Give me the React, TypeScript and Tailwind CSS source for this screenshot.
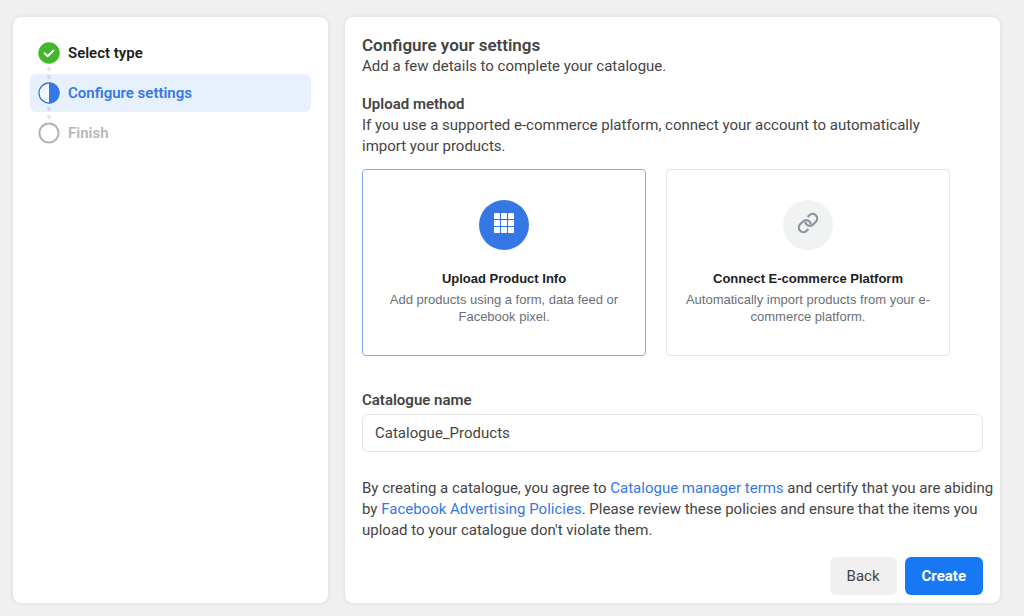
import React, { useState } from "react";
import clsx from "clsx";

type StepStatus = "done" | "current" | "upcoming";

interface Step {
  label: string;
  status: StepStatus;
}

const STEPS: Step[] = [
  { label: "Select type", status: "done" },
  { label: "Configure settings", status: "current" },
  { label: "Finish", status: "upcoming" },
];

function StepIcon({ status }: { status: StepStatus }) {
  if (status === "done") {
    return (
      <svg width="22" height="22" viewBox="0 0 22 22" aria-hidden="true">
        <circle cx="11" cy="11" r="10.7" fill="#42b72a" />
        <path
          d="M6.6 11.4l3 2.9 5.8-5.7"
          fill="none"
          stroke="#fff"
          strokeWidth="2"
          strokeLinecap="round"
          strokeLinejoin="round"
        />
      </svg>
    );
  }
  if (status === "current") {
    return (
      <svg width="22" height="22" viewBox="0 0 22 22" aria-hidden="true">
        <circle cx="11" cy="11" r="10" fill="#f3f8ff" stroke="#3578e5" strokeWidth="1.3" />
        <path d="M11 .5a10.5 10.5 0 0 1 0 21z" fill="#3578e5" />
      </svg>
    );
  }
  return (
    <svg width="22" height="22" viewBox="0 0 22 22" aria-hidden="true">
      <circle cx="11" cy="11" r="9.6" fill="#fff" stroke="#b0b3b8" strokeWidth="2" />
    </svg>
  );
}

function StepItem({ step, first, last }: { step: Step; first: boolean; last: boolean }) {
  const current = step.status === "current";
  const dot = current ? "bg-[#ccd9e9]" : "bg-[#e4e6e8]";

  return (
    <li
      aria-current={current ? "step" : undefined}
      className={clsx(
        "flex items-center gap-2 rounded-md px-2 py-px",
        current && "bg-[#e7f0fd]"
      )}
    >
      <div className="flex flex-col items-center gap-[3px]">
        <span className={clsx("size-1 rounded-full", first ? "bg-transparent" : dot)} />
        <StepIcon status={step.status} />
        <span className={clsx("size-1 rounded-full", last ? "bg-transparent" : dot)} />
      </div>
      <span
        className={clsx(
          "text-[15px] leading-[21px] font-semibold",
          step.status === "done" && "text-[#1c1e21]",
          current && "text-[#3578e5]",
          step.status === "upcoming" && "text-[#b4b7bb]"
        )}
      >
        {step.label}
      </span>
    </li>
  );
}

function GridIcon() {
  const cells = [0, 7, 14];
  return (
    <svg width="20" height="20" viewBox="0 0 20 20" fill="#fff" aria-hidden="true">
      {cells.map((y) =>
        cells.map((x) => <rect key={`${x}-${y}`} x={x} y={y} width="6" height="6" rx="0.8" />)
      )}
    </svg>
  );
}

function LinkIcon() {
  return (
    <svg
      width="22"
      height="22"
      viewBox="0 0 24 24"
      fill="none"
      stroke="#8d949e"
      strokeWidth="2.4"
      aria-hidden="true"
    >
      <path d="M9 10.5a5 5 0 0 0 8.54 3.04l3-3a5 5 0 0 0-7.07-7.07l-1.9 1.9" />
      <path d="M15 13.5a5 5 0 0 0-8.54-3.04l-3 3a5 5 0 0 0 7.07 7.07l1.9-1.9" />
    </svg>
  );
}

interface MethodCardProps {
  value: string;
  title: string;
  description: React.ReactNode;
  icon: React.ReactNode;
  selected: boolean;
  onSelect: (value: string) => void;
}

function MethodCard({ value, title, description, icon, selected, onSelect }: MethodCardProps) {
  return (
    <label
      className={clsx(
        "relative flex cursor-pointer flex-col items-center rounded border px-4 py-[30px] text-center font-['Liberation_Sans',Arial,sans-serif] text-[13px] leading-[17px]",
        selected ? "border-[#84abee]" : "border-[#e4e6e8]"
      )}
    >
      <input
        type="radio"
        name="upload-method"
        value={value}
        checked={selected}
        onChange={() => onSelect(value)}
        className="sr-only"
      />
      <span
        className={clsx(
          "flex size-[50px] items-center justify-center rounded-full pb-1",
          selected ? "bg-[#3578e5]" : "bg-[#f1f3f3]"
        )}
      >
        {icon}
      </span>
      <span className="mt-5 font-bold text-[#1c1e21]">{title}</span>
      <span className="mt-1 text-[#6a7078]">{description}</span>
    </label>
  );
}

export default function App() {
  const [method, setMethod] = useState("upload");
  const [name, setName] = useState("Catalogue_Products");

  return (
    <div className="flex min-h-screen items-stretch gap-[17px] bg-[#f0f0f0] pt-[17px] pr-6 pb-[13px] pl-[13px] font-[Roboto,sans-serif] text-[15px] leading-[21px] text-[#444]">
      <aside className="w-[315px] shrink-0 rounded-lg bg-white p-[17px] shadow-[0_0_4px_rgba(0,0,0,0.1)]">
        <ol className="flex flex-col gap-0.5">
          {STEPS.map((step, i) => (
            <StepItem
              key={step.label}
              step={step}
              first={i === 0}
              last={i === STEPS.length - 1}
            />
          ))}
        </ol>
      </aside>

      <main className="min-w-0 flex-1 rounded-lg bg-white px-[17px] pt-[18px] pb-2 shadow-[0_0_4px_rgba(0,0,0,0.1)]">
        <form onSubmit={(e) => e.preventDefault()}>
          <h1 className="text-[17px] font-semibold">Configure your settings</h1>
          <p>Add a few details to complete your catalogue.</p>

          <section className="mt-[17px] mr-[33px]">
            <h2 className="font-semibold">Upload method</h2>
            <p>
              If you use a supported e-commerce platform, connect your account to
              automatically import your products.
            </p>
            <div className="mt-3 grid grid-cols-2 gap-5">
              <MethodCard
                value="upload"
                title="Upload Product Info"
                description="Add products using a form, data feed or Facebook pixel."
                icon={<GridIcon />}
                selected={method === "upload"}
                onSelect={setMethod}
              />
              <MethodCard
                value="connect"
                title="Connect E-commerce Platform"
                description={
                  <>
                    Automatically import products from your e-
                    <br />
                    commerce platform.
                  </>
                }
                icon={<LinkIcon />}
                selected={method === "connect"}
                onSelect={setMethod}
              />
            </div>
          </section>

          <div className="mt-[34px]">
            <label htmlFor="catalogue-name" className="block font-semibold">
              Catalogue name
            </label>
            <input
              id="catalogue-name"
              type="text"
              value={name}
              onChange={(e) => setName(e.target.value)}
              className="mt-[3px] block h-[38px] w-full rounded-md border border-[#e4e4e4] px-3"
            />
          </div>

          <p className="mt-[26px] -mr-3">
            By creating a catalogue, you agree to{" "}
            <a href="#terms" className="text-[#3578e5]">
              Catalogue manager terms
            </a>{" "}
            and certify that you are abiding
            <br />
            by{" "}
            <a href="#policies" className="text-[#3578e5]">
              Facebook Advertising Policies
            </a>
            . Please review these policies and ensure that the items you
            <br />
            upload to your catalogue don't violate them.
          </p>

          <div className="mt-4 flex justify-end gap-2">
            <button type="button" className="h-[38px] rounded-md bg-[#f0f0f0] px-[17px]">
              Back
            </button>
            <button
              type="submit"
              className="h-[38px] rounded-md bg-[#1877f2] px-[17px] font-bold text-white"
            >
              Create
            </button>
          </div>
        </form>
      </main>
    </div>
  );
}
